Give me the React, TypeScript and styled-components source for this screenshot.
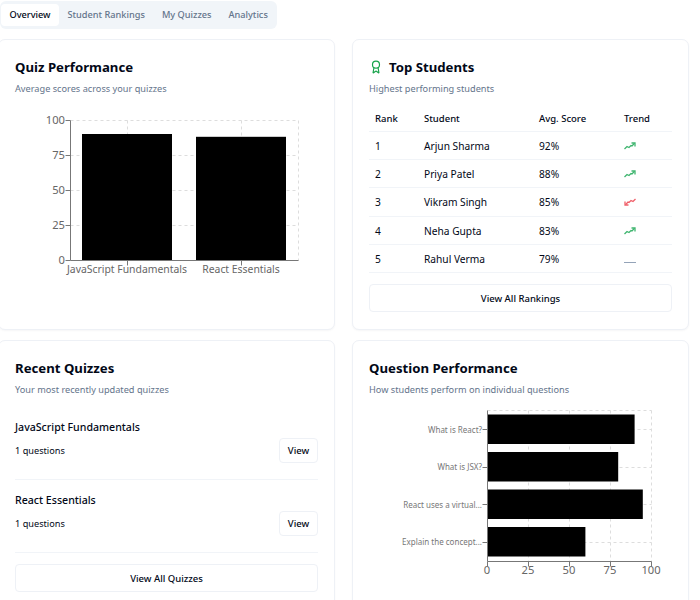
import React from 'react';
import styled, { createGlobalStyle } from 'styled-components';
import { Award } from 'lucide-react';

const GlobalStyle = createGlobalStyle`
  html, body {
    margin: 0;
    padding: 0;
    height: 600px;
    overflow: hidden;
    background: #fff;
    color: #020817;
    font-family: 'Noto Sans', 'Liberation Sans', sans-serif;
  }
`;

const Page = styled.div`
  width: 700px;
  padding-top: 1px;
`;

const TabList = styled.div`
  display: inline-flex;
  align-items: center;
  box-sizing: border-box;
  height: 28px;
  padding: 0 1px;
  border-radius: 6px;
  background: #f1f5f9;
  vertical-align: top;
`;

const Tab = styled.div<{ $active?: boolean }>`
  display: flex;
  align-items: center;
  box-sizing: border-box;
  height: 22px;
  padding: 0 8.5px 1px;
  border-radius: 4px;
  font-size: 9.2px;
  font-weight: 500;
  white-space: nowrap;
  color: ${({ $active }) => ($active ? '#020817' : '#64748b')};
  background: ${({ $active }) => ($active ? '#fff' : 'transparent')};
`;

const Grid = styled.div`
  display: grid;
  grid-template-columns: 337px 337px;
  grid-template-rows: 291px 300px;
  column-gap: 17px;
  row-gap: 10px;
  margin: 10px 0 0 -2px;
`;

const Card = styled.section`
  box-sizing: border-box;
  border: 1px solid #eef1f6;
  border-radius: 7px;
  background: #fff;
  padding: 17px 16px 16px;
  box-shadow: 0 1px 2px rgba(15, 23, 42, 0.04);
`;

const CardTitle = styled.h3`
  display: flex;
  align-items: center;
  gap: 6px;
  margin: 0;
  font-size: 13.2px;
  line-height: 20px;
  font-weight: 700;
  color: #020817;
`;

const CardSubtitle = styled.p`
  margin: 5px 0 0;
  font-size: 9.2px;
  line-height: 14px;
  color: #64748b;
`;

const ChartSvg = styled.svg<{ $top: number }>`
  display: block;
  overflow: visible;
  margin-top: ${({ $top }) => $top}px;
`;

const AxisLabel = styled.text<{ $size: number }>`
  font-family: 'Noto Sans', sans-serif;
  font-size: ${({ $size }) => $size}px;
  fill: ${({ $size }) => ($size < 9 ? '#777' : '#666')};
`;

const ScoreTable = styled.table`
  width: 303px;
  margin-top: 11px;
  border-collapse: collapse;
  table-layout: fixed;
  font-size: 10.2px;
`;

const HeadCell = styled.th<{ $w: number }>`
  width: ${({ $w }) => $w}px;
  height: 24px;
  padding: 0 0 0 6px;
  box-sizing: border-box;
  text-align: left;
  font-size: 9.5px;
  font-weight: 500;
  color: #020817;
  border-bottom: 1px solid #f1f4f8;
`;

const BodyRow = styled.tr`
  height: 28.4px;
`;

const BodyCell = styled.td`
  padding: 1px 0 0 6px;
  border-bottom: 1px solid #f1f4f8;
  color: #020817;
`;

const IconCell = styled.div`
  display: flex;
  align-items: center;
`;

const TrendSvg = styled.svg<{ $down?: boolean }>`
  display: block;
  fill: none;
  stroke: ${({ $down }) => ($down ? '#f0606a' : '#3fb56f')};
  stroke-width: 1.3;
  transform: ${({ $down }) => ($down ? 'rotate(180deg)' : 'none')};
`;

const FlatTrend = styled.span`
  display: block;
  width: 12px;
  height: 1px;
  margin-top: 6px;
  background: #94a3b8;
`;

const WideButton = styled.div`
  display: flex;
  align-items: center;
  justify-content: center;
  box-sizing: border-box;
  height: 28px;
  margin-top: 11px;
  border: 1px solid #eef1f6;
  border-radius: 4px;
  font-size: 9.5px;
  font-weight: 500;
  color: #020817;
`;

const QuizList = styled.div`
  margin-top: 10px;
`;

const QuizItem = styled.div`
  box-sizing: border-box;
  height: 73px;
  padding-top: 12px;
  border-bottom: 1px solid #f1f4f8;
`;

const QuizName = styled.div`
  font-size: 10.6px;
  line-height: 16px;
  font-weight: 500;
`;

const QuizMeta = styled.div`
  display: flex;
  align-items: center;
  justify-content: space-between;
  margin-top: 3px;
  font-size: 9.2px;
`;

const ViewButton = styled.div`
  display: flex;
  align-items: center;
  justify-content: center;
  box-sizing: border-box;
  width: 39px;
  height: 25px;
  border: 1px solid #eef1f6;
  border-radius: 4px;
  font-size: 9.5px;
  font-weight: 500;
`;

const students = [
  { rank: 1, name: 'Arjun Sharma', score: '92%', trend: 'up' },
  { rank: 2, name: 'Priya Patel', score: '88%', trend: 'up' },
  { rank: 3, name: 'Vikram Singh', score: '85%', trend: 'down' },
  { rank: 4, name: 'Neha Gupta', score: '83%', trend: 'up' },
  { rank: 5, name: 'Rahul Verma', score: '79%', trend: 'flat' },
];

const quizzes = ['JavaScript Fundamentals', 'React Essentials'];

const questions = [
  { label: 'What is React?', value: 90 },
  { label: 'What is JSX?', value: 80 },
  { label: 'React uses a virtual...', value: 95 },
  { label: 'Explain the concept...', value: 60 },
];

function TrendIcon({ trend }: { trend: string }) {
  if (trend === 'flat') return <FlatTrend />;
  return (
    <TrendSvg $down={trend === 'down'} width="12" height="8" viewBox="0 0 12 8">
      <path d="M0.5 7 L3 4.5 L5 5.5 L7 3.5 L8 4 L10.5 1.2" />
      <path d="M7.5 1 H11 V4.5" />
    </TrendSvg>
  );
}

function QuizChart() {
  const left = 55;
  const right = 283;
  const top = 10;
  const bottom = 150;
  const ticks = [0, 25, 50, 75, 100];
  const yFor = (v: number) => bottom - (v / 100) * (bottom - top);
  return (
    <ChartSvg $top={14} width="303" height="180">
      <g stroke="#ddd" strokeDasharray="3 3" fill="none" transform="translate(0.5 0.5)">
        {ticks.slice(1).map((t) => (
          <line key={t} x1={left} x2={right} y1={yFor(t)} y2={yFor(t)} />
        ))}
        <line x1={112} x2={112} y1={top} y2={bottom} />
        <line x1={226} x2={226} y1={top} y2={bottom} />
        <line x1={right} x2={right} y1={top} y2={bottom} />
      </g>
      <rect x={67} y={yFor(90)} width={90} height={bottom - yFor(90)} fill="#000" />
      <rect x={181} y={yFor(88)} width={90} height={bottom - yFor(88)} fill="#000" />
      <g stroke="#777" transform="translate(0.5 0.5)">
        <line x1={left} x2={left} y1={top} y2={bottom} />
        <line x1={left} x2={right} y1={bottom} y2={bottom} />
        {ticks.map((t) => (
          <line key={t} x1={left - 5} x2={left} y1={yFor(t)} y2={yFor(t)} />
        ))}
        <line x1={112} x2={112} y1={bottom} y2={bottom + 5} />
        <line x1={226} x2={226} y1={bottom} y2={bottom + 5} />
      </g>
      {ticks.map((t) => (
        <AxisLabel key={t} $size={11.2} x={left - 5} y={yFor(t) + 4} textAnchor="end">
          {t}
        </AxisLabel>
      ))}
      <AxisLabel $size={10.4} x={112} y={163} textAnchor="middle">JavaScript Fundamentals</AxisLabel>
      <AxisLabel $size={10.4} x={226} y={163} textAnchor="middle">React Essentials</AxisLabel>
    </ChartSvg>
  );
}

function QuestionChart() {
  const left = 118;
  const right = 282;
  const top = 0;
  const bottom = 151;
  const ticks = [0, 25, 50, 75, 100];
  const xFor = (v: number) => left + (v / 100) * (right - left);
  const bars = [4.5, 42, 79.5, 117];
  return (
    <ChartSvg $top={13} width="303" height="185">
      <g stroke="#ddd" strokeDasharray="3 3" fill="none" transform="translate(0.5 0.5)">
        {ticks.slice(1).map((t) => (
          <line key={t} x1={xFor(t)} x2={xFor(t)} y1={top} y2={bottom} />
        ))}
        <line x1={left} x2={right} y1={top} y2={top} />
        {bars.map((b) => (
          <line key={b} x1={left} x2={right} y1={Math.floor(b) + 15} y2={Math.floor(b) + 15} />
        ))}
      </g>
      {questions.map((q, i) => (
        <rect key={q.label} x={left} y={bars[i]} width={xFor(q.value) - left} height={29.5} fill="#000" />
      ))}
      <g stroke="#777" transform="translate(0.5 0.5)">
        <line x1={left} x2={left} y1={top} y2={bottom} />
        <line x1={left} x2={right} y1={bottom} y2={bottom} />
        {ticks.map((t) => (
          <line key={t} x1={xFor(t)} x2={xFor(t)} y1={bottom} y2={bottom + 5} />
        ))}
        {bars.map((b) => (
          <line key={b} x1={left - 5} x2={left} y1={Math.floor(b) + 15} y2={Math.floor(b) + 15} />
        ))}
      </g>
      {ticks.map((t) => (
        <AxisLabel key={t} $size={11.2} x={xFor(t)} y={164} textAnchor="middle">
          {t}
        </AxisLabel>
      ))}
      {questions.map((q, i) => (
        <AxisLabel key={q.label} $size={8} x={left - 5} y={bars[i] + 18} textAnchor="end">
          {q.label}
        </AxisLabel>
      ))}
    </ChartSvg>
  );
}

export default function App() {
  return (
    <Page>
      <GlobalStyle />
      <TabList>
        <Tab $active>Overview</Tab>
        <Tab>Student Rankings</Tab>
        <Tab>My Quizzes</Tab>
        <Tab>Analytics</Tab>
      </TabList>
      <Grid>
        <Card>
          <CardTitle>Quiz Performance</CardTitle>
          <CardSubtitle>Average scores across your quizzes</CardSubtitle>
          <QuizChart />
        </Card>
        <Card>
          <CardTitle>
            <Award size={14} color="#16a34a" />
            Top Students
          </CardTitle>
          <CardSubtitle>Highest performing students</CardSubtitle>
          <ScoreTable>
            <thead>
              <tr>
                <HeadCell $w={49}>Rank</HeadCell>
                <HeadCell $w={115}>Student</HeadCell>
                <HeadCell $w={85}>Avg. Score</HeadCell>
                <HeadCell $w={54}>Trend</HeadCell>
              </tr>
            </thead>
            <tbody>
              {students.map((s) => (
                <BodyRow key={s.rank}>
                  <BodyCell>{s.rank}</BodyCell>
                  <BodyCell>{s.name}</BodyCell>
                  <BodyCell>{s.score}</BodyCell>
                  <BodyCell>
                    <IconCell>
                      <TrendIcon trend={s.trend} />
                    </IconCell>
                  </BodyCell>
                </BodyRow>
              ))}
            </tbody>
          </ScoreTable>
          <WideButton>View All Rankings</WideButton>
        </Card>
        <Card>
          <CardTitle>Recent Quizzes</CardTitle>
          <CardSubtitle>Your most recently updated quizzes</CardSubtitle>
          <QuizList>
            {quizzes.map((q) => (
              <QuizItem key={q}>
                <QuizName>{q}</QuizName>
                <QuizMeta>
                  1 questions
                  <ViewButton>View</ViewButton>
                </QuizMeta>
              </QuizItem>
            ))}
          </QuizList>
          <WideButton>View All Quizzes</WideButton>
        </Card>
        <Card>
          <CardTitle>Question Performance</CardTitle>
          <CardSubtitle>How students perform on individual questions</CardSubtitle>
          <QuestionChart />
        </Card>
      </Grid>
    </Page>
  );
}
